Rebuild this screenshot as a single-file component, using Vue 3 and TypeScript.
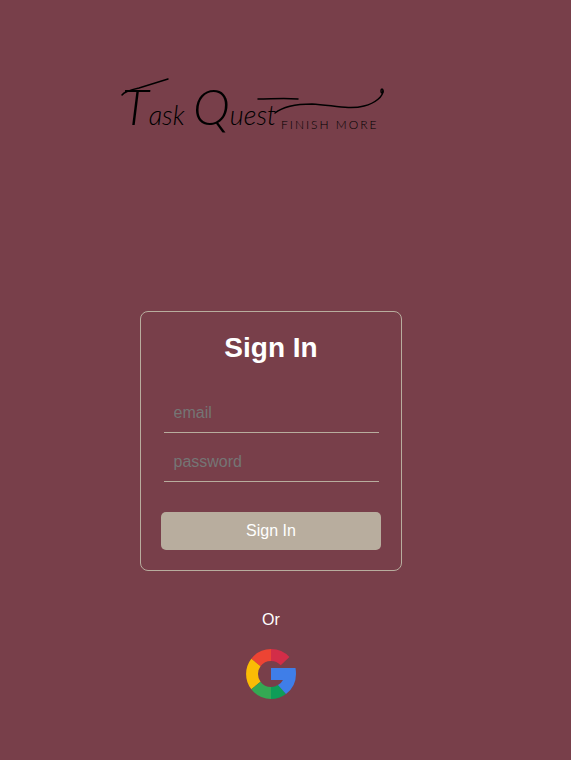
<script setup lang="ts">
import { ref } from 'vue'

const email = ref('')
const password = ref('')
</script>

<template>
  <main class="page">
    <svg class="logo" viewBox="0 0 270 74" role="img" aria-label="Task Quest, finish more">
      <g class="script">
        <text x="8" y="51"><tspan class="initial">T</tspan>ask</text>
        <text x="79" y="51"><tspan class="initial">Q</tspan>uest</text>
      </g>
      <g class="flourish">
        <path d="M8 21C10 18 16 16 25 14L54 5" />
        <path d="M144 25C157 25 170 24 184 25" />
        <path d="M161 39C171 31 185 30 198 30C218 31 235 36 250 32C262 29 269 22 269 17" />
        <ellipse cx="268" cy="17" rx="1" ry="2" />
      </g>
      <text class="tagline" x="167" y="55">FINISH MORE</text>
    </svg>

    <form class="card" @submit.prevent>
      <h1>Sign In</h1>
      <input v-model="email" type="email" placeholder="email" aria-label="email" />
      <input v-model="password" type="password" placeholder="password" aria-label="password" />
      <button class="submit" type="submit">Sign In</button>
    </form>

    <p class="or">Or</p>

    <button class="google" type="button" aria-label="Google">
      <svg viewBox="-25 -25 50 50" aria-hidden="true">
        <path fill="#ed4433" d="M0-25A25 25 0 0 0-19.7-15.3L-10.5-7.7A13 13 0 0 1 0-13Z" />
        <path fill="#d32d48" d="M0-25A25 25 0 0 1 18.4-17L9.7-8.7A13 13 0 0 0 0-13Z" />
        <path fill="#fbbc05" d="M-19.7-15.3A25 25 0 0 0-19.7 15.3L-10.5 7.7A13 13 0 0 1-10.5-7.7Z" />
        <path fill="#34a853" d="M-19.7 15.3A25 25 0 0 0 0 25V13A13 13 0 0 1-10.5 7.7Z" />
        <path fill="#0f9d58" d="M0 25A25 25 0 0 0 15 20L7.3 10.8A13 13 0 0 1 0 13Z" />
        <path fill="#3f7ee8" d="M0-6H24.5Q25-3 25 0A25 25 0 0 1 15 20L7 11Q10.500 9 12 6H0Z" />
      </svg>
    </button>
  </main>
</template>

<style>
body {
  background: #783f4a;
}
</style>

<style scoped>
.page {
  box-sizing: border-box;
  min-height: 100vh;
  padding: 74px 29px 0 0;
  display: flex;
  flex-direction: column;
  align-items: center;
  color: #fff;
  font-family: "Liberation Sans", Arial, sans-serif;
  font-size: 16px;
  line-height: 18px;
}

.logo {
  width: 270px;
  height: 74px;
  margin-right: 44px;
  margin-bottom: 163px;
}

.script {
  font-family: Lato, sans-serif;
  font-size: 27px;
  font-style: italic;
  font-weight: 300;
  fill: #000;
}

.initial {
  font-size: 50px;
}

.flourish {
  fill: none;
  stroke: #000;
  stroke-width: 1.5;
  stroke-linecap: round;
}

.tagline {
  font-family: Lato, sans-serif;
  font-size: 12px;
  font-weight: 300;
  letter-spacing: 2px;
  fill: #000;
}

.card {
  box-sizing: border-box;
  width: 262px;
  padding: 20px;
  display: flex;
  flex-direction: column;
  align-items: center;
  border: 1px solid #b8ad9e;
  border-radius: 8px;
}

h1 {
  margin: 0 0 30px;
  font-size: 28px;
  line-height: 32px;
}

input {
  box-sizing: border-box;
  width: 215px;
  height: 39px;
  margin: 0 0 10px;
  padding: 10px;
  border: 0;
  border-bottom: 1px solid #b8ad9e;
  background: transparent;
  color: #fff;
  font: inherit;
}

input::placeholder {
  color: #757575;
}

.submit {
  width: 100%;
  height: 38px;
  margin-top: 20px;
  border: 0;
  border-radius: 5px;
  background: #b8ad9e;
  color: #fff;
  font: inherit;
}

.or {
  margin: 40px 0 20px;
}

.google {
  width: 50px;
  height: 50px;
  padding: 0;
  border: 0;
  background: transparent;
}

.google svg {
  display: block;
}
</style>
